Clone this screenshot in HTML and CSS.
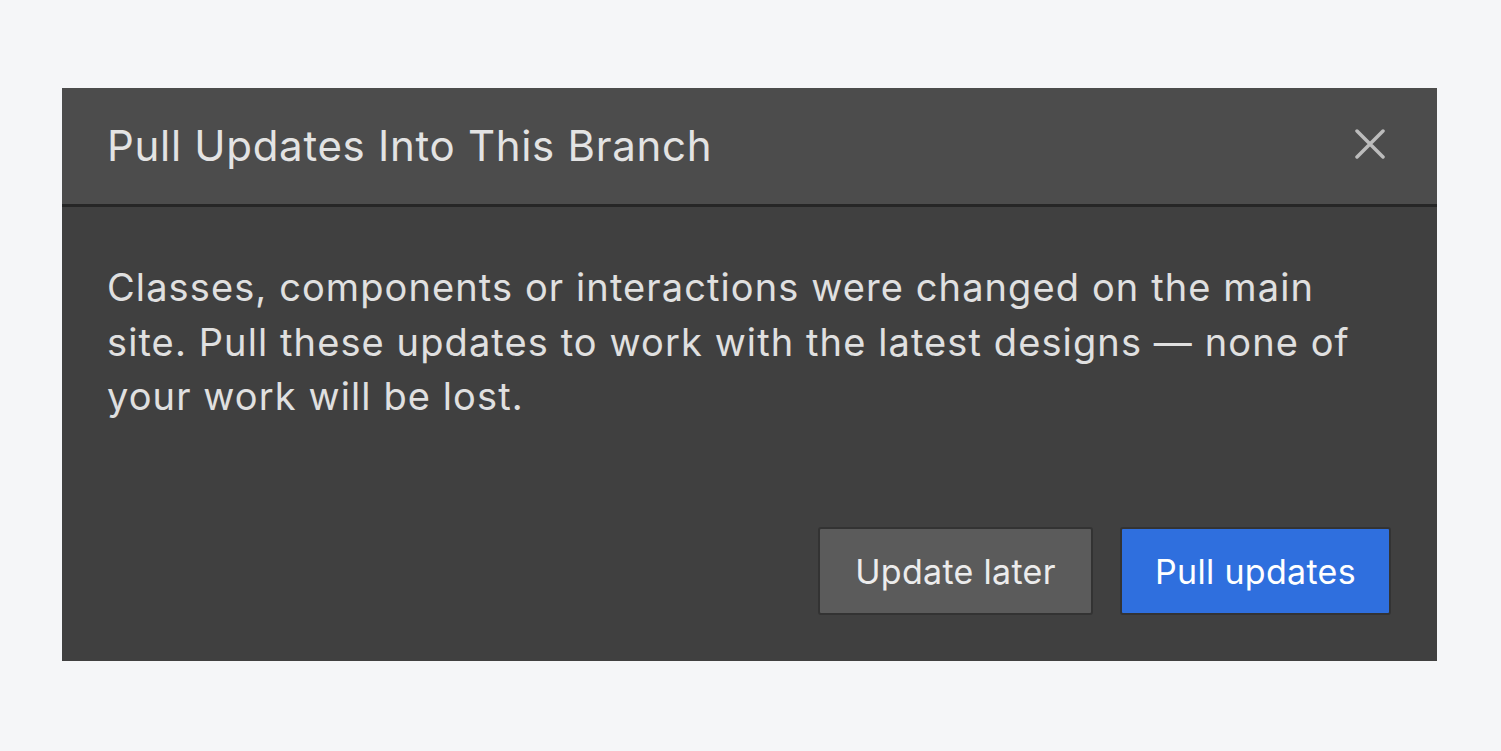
FILE: index.html
```html
<!DOCTYPE html>
<html lang="en">
<head>
<meta charset="utf-8">
<title>Pull Updates Into This Branch</title>
<link rel="stylesheet" href="styles.css">
</head>
<body>
<div class="dialog">
  <div class="dialog-header">
    <h1 class="dialog-title">Pull Updates Into This Branch</h1>
    <button class="close-btn" aria-label="Close">
      <svg width="30" height="30" viewBox="0 0 30 30"><path d="M2 2 L28 28 M28 2 L2 28" stroke="#bcbcbc" stroke-width="3.5" stroke-linecap="round" fill="none"/></svg>
    </button>
  </div>
  <div class="dialog-body">
    <p class="dialog-text">Classes, components or interactions were changed on the main site. Pull these updates to work with the latest designs — none of your work will be lost.</p>
    <div class="dialog-actions">
      <button class="btn btn-secondary">Update later</button>
      <button class="btn btn-primary">Pull updates</button>
    </div>
  </div>
</div>
</body>
</html>
```
FILE: styles.css
```css
html, body {
  margin: 0;
  padding: 0;
}
body {
  background: #f5f6f8;
  font-family: Inter, "Noto Sans", sans-serif;
  height: 751px;
  overflow: hidden;
}
.dialog {
  margin: 88px 0 0 62px;
  width: 1375px;
  height: 573px;
  background: #404040;
  display: flex;
  flex-direction: column;
}
.dialog-header {
  height: 116px;
  background: #4c4c4c;
  border-bottom: 3px solid #262626;
  display: flex;
  align-items: center;
  justify-content: space-between;
  padding: 0 52px 0 45px;
  flex-shrink: 0;
}
.dialog-title {
  margin: 0 0 2px;
  font-size: 42px;
  font-weight: 400;
  color: #e3e3e3;
  letter-spacing: 0.7px;
}
.close-btn {
  background: none;
  border: 0;
  padding: 0;
  width: 30px;
  height: 30px;
  display: flex;
  margin-bottom: 4px;
}
.dialog-body {
  flex: 1;
  display: flex;
  flex-direction: column;
  justify-content: space-between;
  padding: 53px 46px 46px 45px;
}
.dialog-text {
  margin: 0;
  font-size: 38px;
  line-height: 54.5px;
  color: #e0e0e0;
  letter-spacing: 1.1px;
}
.dialog-actions {
  display: flex;
  justify-content: flex-end;
  gap: 27px;
}
.btn {
  height: 88px;
  font-family: Inter, "Noto Sans", sans-serif;
  font-size: 34px;
  letter-spacing: 0.3px;
  border-radius: 3px;
  padding: 0 20px;
  box-sizing: border-box;
}
.btn-secondary {
  width: 275px;
  background: #5b5b5b;
  color: #ececec;
  border: 2px solid #333333;
}
.btn-primary {
  width: 271px;
  background: #2f6fde;
  color: #ffffff;
  border: 2px solid #333333;
}
```
